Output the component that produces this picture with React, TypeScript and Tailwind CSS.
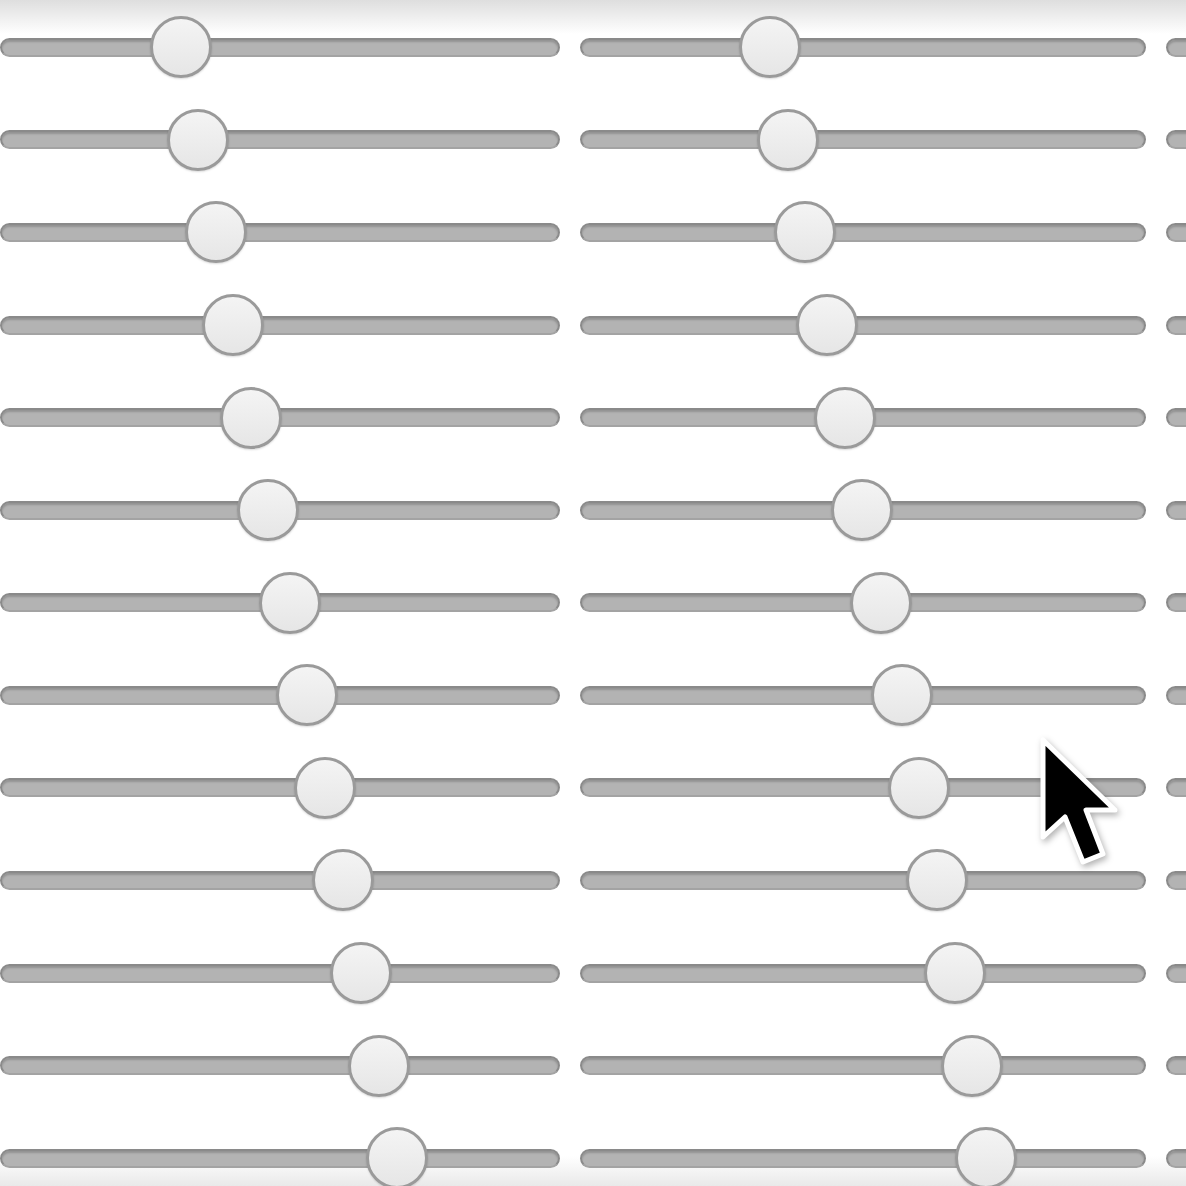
import React from "react";

const left = [181, 198, 216, 233, 251, 268, 290, 307, 325, 343, 361, 379, 397];
const right = [190, 208, 225, 247, 265, 282, 301, 322, 339, 357, 375, 392, 406];

const Slider = ({ value, width }: { value?: number; width: string }) => {
    return (
        <div className={`relative h-full ${width} flex items-center`}>
            <div className="w-full h-[19px] rounded-full bg-[#b3b3b3] border-2 border-[#8a8a8a] border-b-[#a3a3a3] shadow-[inset_0_2px_2px_rgba(0,0,0,0.18)]" />
            {value !== undefined && (
                <div
                    className="absolute top-1/2 -translate-y-1/2 -translate-x-1/2 w-[62px] h-[62px] rounded-full bg-gradient-to-b from-[#f4f4f4] to-[#e6e6e6] border-[3px] border-[#9a9a9a] shadow-[0_1px_2px_rgba(0,0,0,0.15)]"
                    style={{ left: value }}
                />
            )}
        </div>
    );
};

const Cursor = () => (
    <svg
        className="absolute left-[1036px] top-[733px] drop-shadow-[2px_3px_3px_rgba(0,0,0,0.3)]"
        width="90"
        height="140"
        viewBox="-7 -7 90 140"
    >
        <path
            d="M0 0 L0 97 L22 77 L40 122 L60 114 L43 70 L72 70 Z"
            fill="#000"
            stroke="#fff"
            strokeWidth="5"
            strokeLinejoin="round"
        />
    </svg>
);

export default function App() {
    return (
        <div className="relative w-[1186px] h-[1186px] overflow-hidden bg-white">
            <div className="absolute inset-x-0 top-0 h-[34px] bg-gradient-to-b from-[#dedede] to-white" />
            <div className="absolute inset-x-0 bottom-0 h-[30px] bg-gradient-to-t from-[#e9e9e9] to-transparent" />
            <div className="relative pt-[1px]">
                {left.map((l, i) => (
                    <div key={i} className="h-[92.58px] flex gap-[20px]">
                        <Slider value={l} width="w-[560px] shrink-0" />
                        <Slider value={right[i]} width="w-[566px] shrink-0" />
                        <Slider width="w-[566px] shrink-0" />
                    </div>
                ))}
            </div>
            <Cursor />
        </div>
    );
}
